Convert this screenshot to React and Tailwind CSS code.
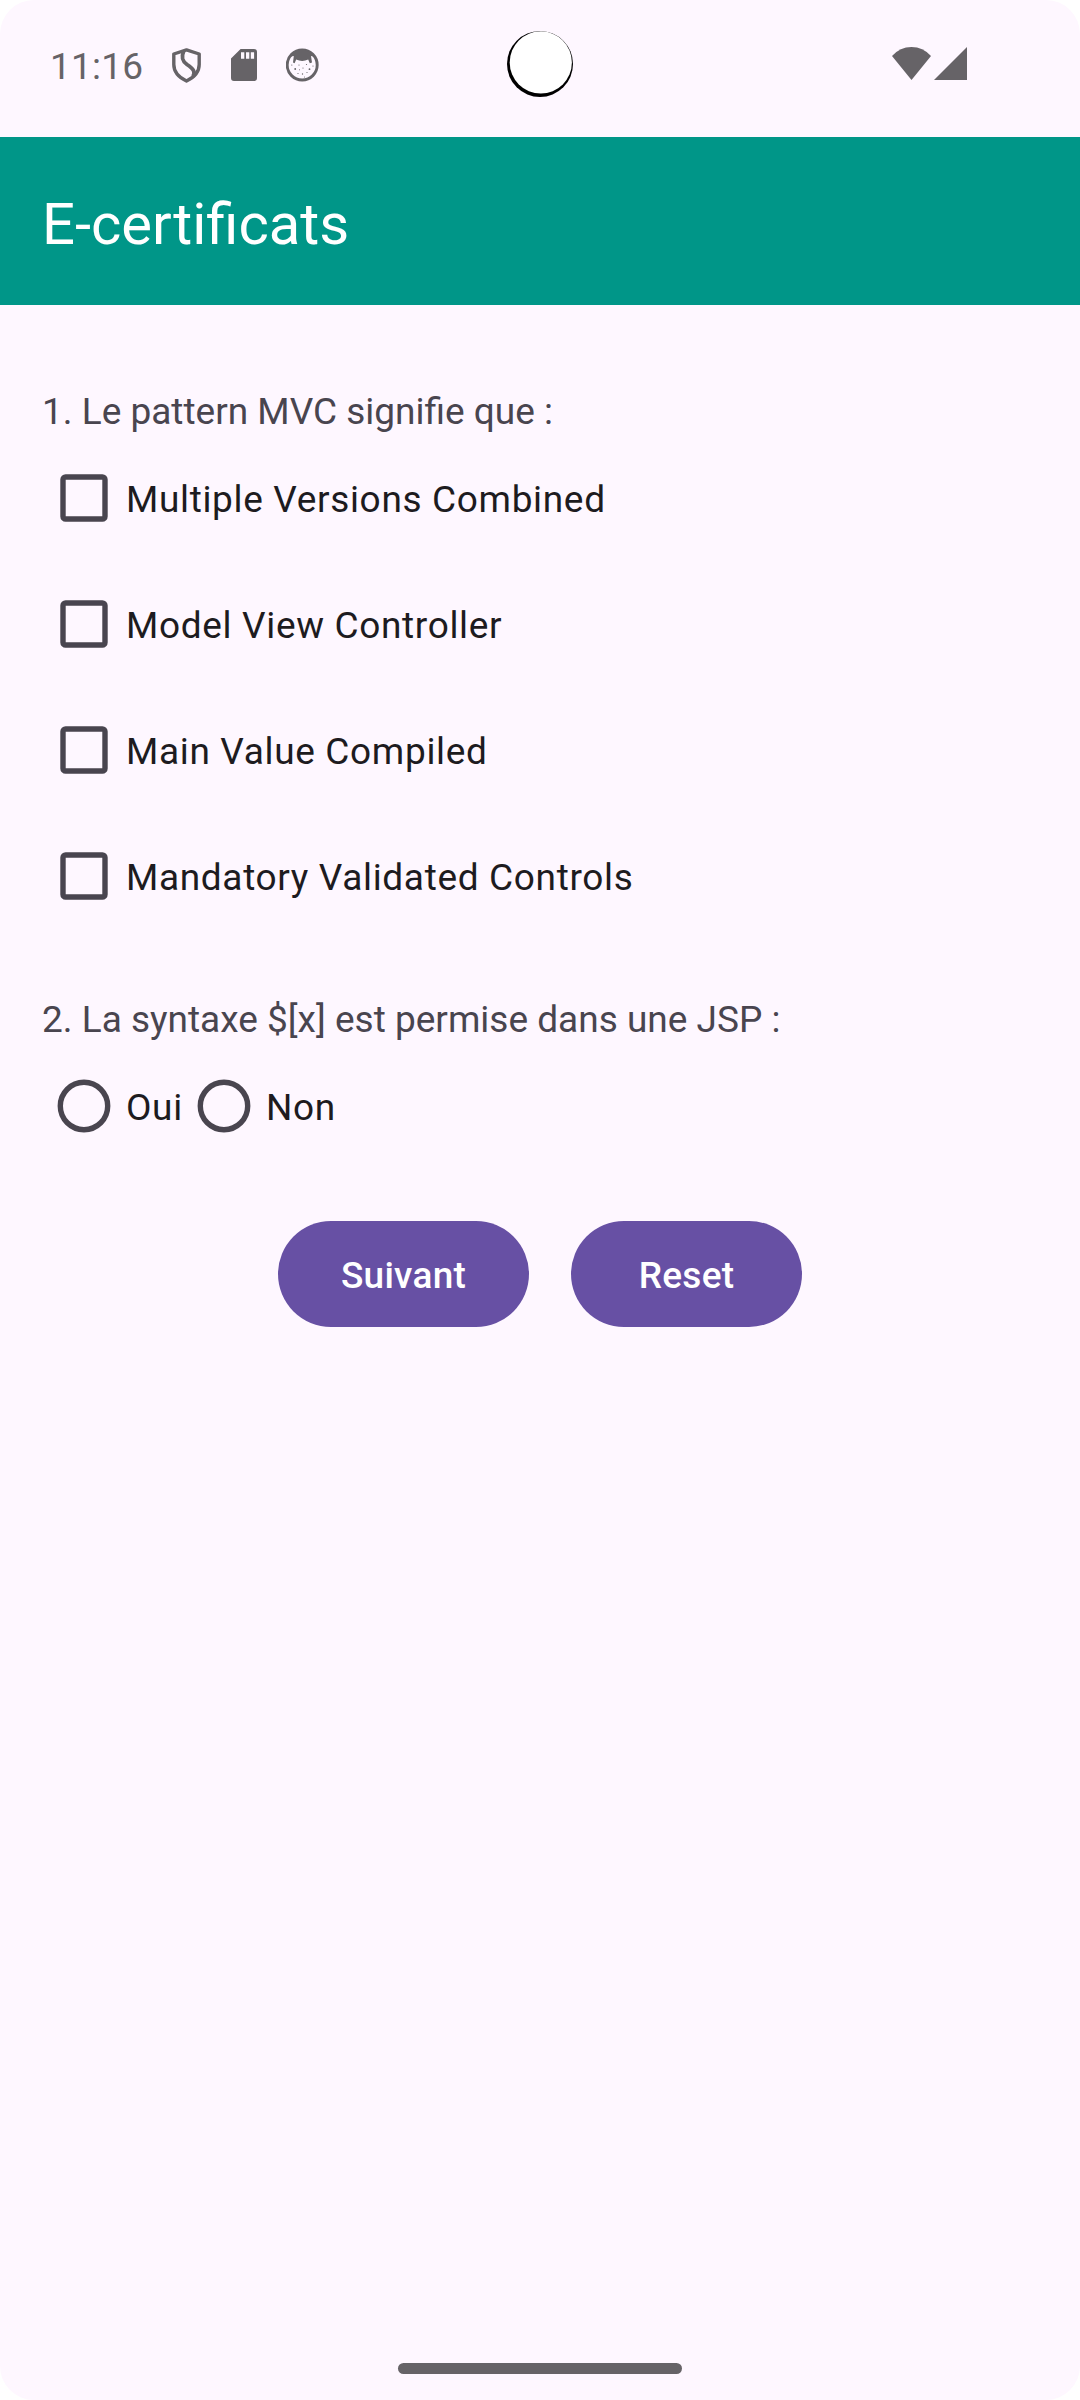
import React from "react";

const OPTIONS = [
  "Multiple Versions Combined",
  "Model View Controller",
  "Main Value Compiled",
  "Mandatory Validated Controls",
];

function ShieldIcon() {
  return (
    <svg className="h-[36px] w-[30px]" viewBox="0 0 30 36" fill="none" stroke="#666367" strokeWidth="3.4" strokeLinejoin="round">
      <path d="M14.5 1.9 L27.2 6 V16.5 C27.2 23.5 22 29.5 14.5 33 C7 29.5 1.8 23.5 1.8 16.5 V6 Z" />
      <path d="M11.8 3 C8.8 9.5 10.5 13.2 15 16.5 C21.5 21 23.6 23.5 21 28.5" strokeWidth="3.8" />
    </svg>
  );
}

function SdCardIcon() {
  return (
    <svg className="h-[32px] w-[26px]" viewBox="0 0 26 32" fill="#666367">
      <path fillRule="evenodd" d="M9.6 0 H23 A3 3 0 0 1 26 3 V29 A3 3 0 0 1 23 32 H3 A3 3 0 0 1 0 29 V9.6 Z M10 3.2 V9.8 H13.3 V3.2 Z M15 3.2 V9.8 H18.3 V3.2 Z M19.8 3.2 V9.8 H23.1 V3.2 Z" />
    </svg>
  );
}

function FaceIcon() {
  return (
    <svg className="h-[34px] w-[34px]" viewBox="0 0 34 34">
      <circle cx="16.2" cy="17" r="15" fill="none" stroke="#666367" strokeWidth="2.9" />
      <path d="M4.5 8.5 Q10 1.5 16.2 1.5 Q22.5 1.5 28 8.5 L25 8 L26 14.5 L23.8 15.3 L22.2 11.6 Q16.2 14.2 10.2 11.6 L8.6 15.3 L7 14.5 L7.8 8 Z" fill="#666367" />
      <g fill="#666367">
        <circle cx="9.2" cy="21" r="0.9" /><circle cx="13" cy="17" r="0.6" />
        <circle cx="17" cy="20" r="0.6" /><circle cx="20.5" cy="16.5" r="0.6" />
        <circle cx="23.5" cy="21.2" r="0.9" /><circle cx="12" cy="25.5" r="0.6" />
        <circle cx="16.5" cy="26" r="0.7" /><circle cx="21" cy="24.5" r="0.6" />
        <circle cx="5.8" cy="17" r="0.6" /><circle cx="27" cy="18" r="0.6" />
        <circle cx="13.5" cy="21.8" r="0.5" /><circle cx="18.5" cy="29" r="0.5" />
      </g>
    </svg>
  );
}

function StatusBar() {
  return (
    <div className="relative flex h-[137px] items-start text-[#666367]">
      <span className="ml-[50px] mt-[45px] w-[122px] text-[37px] leading-[43px] tracking-[0.2px]">11:16</span>
      <div className="mt-[48px]"><ShieldIcon /></div>
      <div className="ml-[29px] mt-[49px]"><SdCardIcon /></div>
      <div className="ml-[29px] mt-[48px]"><FaceIcon /></div>
      <svg className="ml-auto mr-[113px] mt-[47px] h-[33px] w-[75px]" viewBox="0 0 75 33" fill="#666367">
        <path d="M0 9 Q8 0 19.5 0 Q31 0 39 9 L19.5 33 Z" />
        <path d="M75 0 V33 H42 Z" />
      </svg>
      <svg className="absolute left-[507px] top-[31px] h-[66px] w-[66px]" viewBox="0 0 66 66">
        <circle cx="33" cy="33" r="33" fill="#000" />
        <circle cx="33.8" cy="31.4" r="31.1" fill="#fff" />
      </svg>
    </div>
  );
}

function CheckOption({ label }) {
  return (
    <div className="flex h-[126px] items-center">
      <svg className="ml-[18px] h-[48px] w-[48px] shrink-0" viewBox="0 0 48 48">
        <rect x="3" y="3" width="42" height="42" rx="2.6" fill="none" stroke="#49454f" strokeWidth="5.4" />
      </svg>
      <span className="relative top-[2px] ml-[18px] text-[37px] leading-[44px] tracking-[0.66px] text-[#1d1b20]">{label}</span>
    </div>
  );
}

function RadioOption({ label }) {
  return (
    <div className="flex h-[126px] w-[140px] items-center">
      <svg className="ml-[15px] h-[54px] w-[54px] shrink-0" viewBox="0 0 54 54">
        <circle cx="27" cy="27" r="23.7" fill="none" stroke="#49454f" strokeWidth="5.4" />
      </svg>
      <span className="relative top-[2px] ml-[15px] text-[37px] leading-[44px] tracking-[0.66px] text-[#1d1b20]">{label}</span>
    </div>
  );
}

export default function App() {
  return (
    <div className="h-[2400px] w-[1080px] bg-white font-['Roboto',sans-serif]">
      <div className="flex h-full w-full flex-col overflow-hidden rounded-[34px] bg-[#fef7ff]">
        <StatusBar />
        <header className="flex h-[168px] items-center bg-[#009688] pl-[42px] pt-[6px]">
          <h1 className="text-[58px] leading-[68px] text-white">E-certificats</h1>
        </header>
        <main className="flex flex-1 flex-col px-[42px] pt-[85px]">
          <p className="text-[37px] leading-[43px] text-[#49454f]">1. Le pattern MVC signifie que :</p>
          <div className="mt-[2px]">
            {OPTIONS.map((label) => <CheckOption key={label} label={label} />)}
          </div>
          <p className="mt-[59px] text-[37px] leading-[43px] text-[#49454f]">2. La syntaxe $[x] est permise dans une JSP :</p>
          <div className="mt-[2px] flex">
            <RadioOption label="Oui" />
            <RadioOption label="Non" />
          </div>
          <div className="mt-[52px] flex justify-center gap-[42px] text-[37px] font-medium leading-[44px] tracking-[0.26px] text-white">
            <button className="h-[106px] w-[251px] rounded-full bg-[#6750a4] pt-[4px]">Suivant</button>
            <button className="h-[106px] w-[231px] rounded-full bg-[#6750a4] pt-[4px]">Reset</button>
          </div>
        </main>
        <div className="mb-[26px] h-[11px] w-[284px] self-center rounded-full bg-[#666367]" />
      </div>
    </div>
  );
}
